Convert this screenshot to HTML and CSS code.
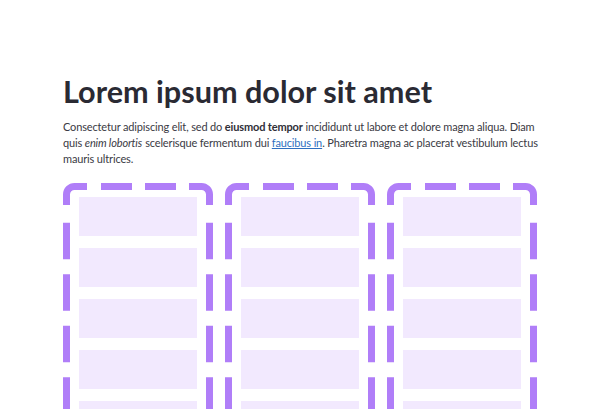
FILE: index.html
```html
<!DOCTYPE html>
<html lang="en">
<head>
<meta charset="utf-8">
<title>Lorem ipsum</title>
<link rel="stylesheet" href="styles.css">
</head>
<body>
<main class="page">
  <h1 class="title">Lorem ipsum dolor sit amet</h1>
  <p class="lead">Consectetur adipiscing elit, sed do <strong>eiusmod tempor</strong> incididunt ut labore et dolore magna aliqua. Diam quis <em>enim lobortis</em> scelerisque fermentum dui <a href="#">faucibus in</a>. Pharetra magna ac placerat vestibulum lectus mauris ultrices.</p>
  <div class="columns">
    <div class="column">
      <svg class="dash" width="150" height="226" viewBox="0 0 150 226" aria-hidden="true">
        <path d="M3.5 22 V11.5 A8 8 0 0 1 11.5 3.5 H24 M38 3.5 H69 M82 3.5 H113 M126 3.5 H138.5 A8 8 0 0 1 146.5 11.5 V22"/>
        <path class="side" d="M3.5 39.7 V226 M146.5 39.7 V226"/>
      </svg>
      <div class="item"></div><div class="item"></div><div class="item"></div><div class="item"></div><div class="item"></div>
    </div>
    <div class="column">
      <svg class="dash" width="150" height="226" viewBox="0 0 150 226" aria-hidden="true">
        <path d="M3.5 22 V11.5 A8 8 0 0 1 11.5 3.5 H24 M38 3.5 H69 M82 3.5 H113 M126 3.5 H138.5 A8 8 0 0 1 146.5 11.5 V22"/>
        <path class="side" d="M3.5 39.7 V226 M146.5 39.7 V226"/>
      </svg>
      <div class="item"></div><div class="item"></div><div class="item"></div><div class="item"></div><div class="item"></div>
    </div>
    <div class="column">
      <svg class="dash" width="150" height="226" viewBox="0 0 150 226" aria-hidden="true">
        <path d="M3.5 22 V11.5 A8 8 0 0 1 11.5 3.5 H24 M38 3.5 H69 M82 3.5 H113 M126 3.5 H138.5 A8 8 0 0 1 146.5 11.5 V22"/>
        <path class="side" d="M3.5 39.7 V226 M146.5 39.7 V226"/>
      </svg>
      <div class="item"></div><div class="item"></div><div class="item"></div><div class="item"></div><div class="item"></div>
    </div>
  </div>
</main>
</body>
</html>
```
FILE: styles.css
```css
html, body {
  margin: 0;
  padding: 0;
  background: #ffffff;
  overflow: hidden;
  height: 409px;
}
.page {
  width: 474px;
  margin: 0 auto;
  padding-top: 73.5px;
}
.title {
  margin: 0;
  font-family: Lato, "Open Sans", sans-serif;
  font-weight: 700;
  font-size: 30.6px;
  line-height: 36px;
  color: #2a2a33;
}
.lead {
  margin: 9.5px 0 0;
  width: 480px;
  font-family: Lato, "Open Sans", sans-serif;
  font-size: 11px;
  letter-spacing: -0.15px;
  line-height: 16.2px;
  color: #3a3a44;
}
.lead strong {
  font-weight: 700;
  color: #2f2f38;
}
.lead em {
  padding-right: 0.5px;
}
.lead a {
  color: #2f6fc0;
  text-decoration: underline;
}
.columns {
  display: flex;
  gap: 12px;
  margin-top: 15.4px;
}
.column {
  position: relative;
  width: 150px;
  height: 226px;
  box-sizing: border-box;
  padding: 14px 16px 0;
  display: flex;
  flex-direction: column;
  gap: 12px;
  overflow: hidden;
}
.item {
  flex: none;
  height: 39px;
  background: #f2e9fe;
}
.dash {
  position: absolute;
  left: 0;
  top: 0;
  pointer-events: none;
  fill: none;
  stroke: #b07ef8;
  stroke-width: 7;
}
.dash .side {
  stroke-dasharray: 36.5 15;
}
```
